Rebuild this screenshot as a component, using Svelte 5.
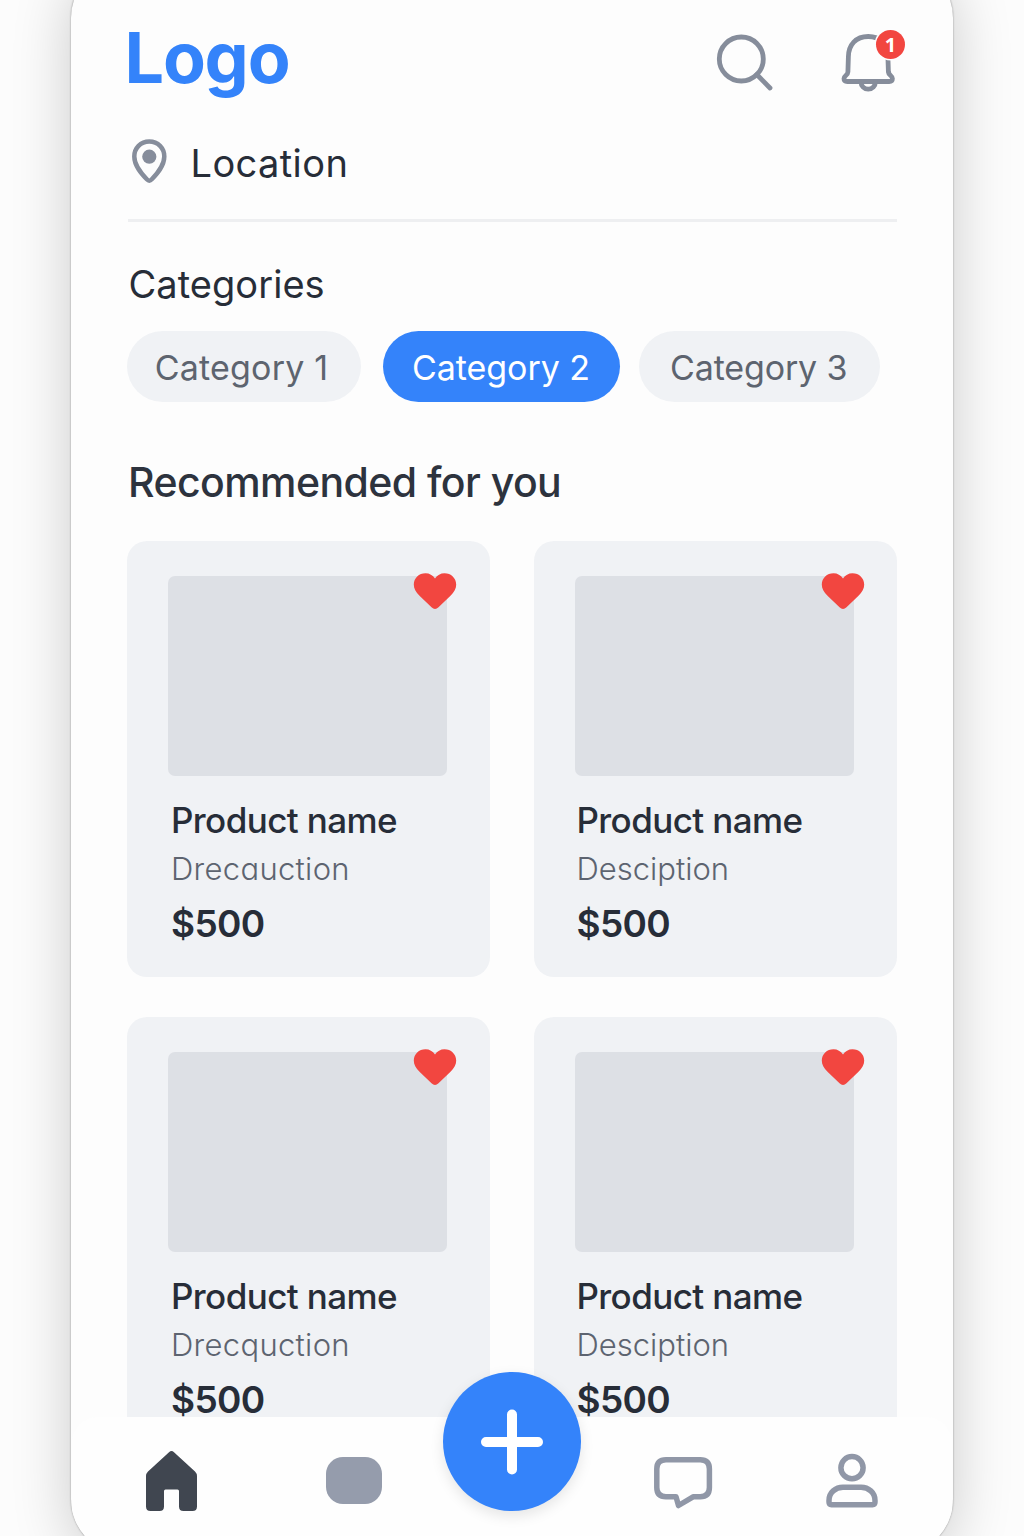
<script>
  const categories = [
    { label: 'Category 1', size: 'first' },
    { label: 'Category 2', size: 'second', active: true },
    { label: 'Category 3', size: 'third' }
  ];

  const products = [
    { name: 'Product name', description: 'Drecauction', price: '$500', side: 'left' },
    { name: 'Product name', description: 'Desciption', price: '$500', side: 'right' },
    { name: 'Product name', description: 'Drecquction', price: '$500', side: 'left' },
    { name: 'Product name', description: 'Desciption', price: '$500', side: 'right' }
  ];
</script>

<div class="screen">
  <div class="phone">
    <main>
      <header>
        <h1><span>Logo</span></h1>
        <div class="actions">
          <svg class="search" viewBox="0 0 60 60" width="60" height="60">
            <circle cx="26.300" cy="28" r="22" />
            <path d="M41.800 43.500 55 57" />
          </svg>
          <div class="bell">
            <svg viewBox="0 0 60 64" width="60" height="64">
              <path d="M28.200 6.500C15.700 6.500 8.700 15 8.400 26.500L7.900 42C7.800 45.500 4 45.500 4 48.500C4 50.600 5.300 51.500 7.300 51.500H49.200C51.200 51.500 52.400 50.600 52.400 48.500C52.400 45.500 48.700 45.500 48.400 42L47.900 26.500C47.600 15 40.700 6.500 28.200 6.500Z" />
              <path d="M21 51.700C21 56 24.200 59.200 28.200 59.200C32.200 59.200 35.400 56 35.400 51.700" />
            </svg>
            <span class="badge">1</span>
          </div>
        </div>
      </header>

      <div class="location">
        <svg viewBox="0 0 36 46" width="36" height="46">
          <path d="M18.300 2.500C9.600 2.500 3.300 9.200 3.300 17.500C3.300 27 10.800 35 15.800 40.300C17.500 42.100 19.100 42.100 20.800 40.300C25.800 35 33.300 27 33.300 17.500C33.300 9.200 27 2.500 18.300 2.500Z" />
          <circle cx="18.300" cy="17.700" r="7.100" />
        </svg>
        <span>Location</span>
      </div>

      <h2 class="categories-title"><span>Categories</span></h2>
      <div class="chips">
        {#each categories as category}
          <button class="chip {category.size}" class:active={category.active}>
            <span>{category.label}</span>
          </button>
        {/each}
      </div>

      <h2 class="recommended"><span>Recommended for you</span></h2>
      <div class="grid">
        {#each products as product}
          <article class="card {product.side}">
            <div class="photo">
              <svg class="heart" viewBox="0 0 44 38" width="44" height="38">
                <path d="M22 6.600C19.800 3.200 16.500 1.200 12.500 1.200C6 1.200 .8 6 .8 12.600C.8 16.800 2.800 20.300 6.500 23.800L18.500 35.300C20.800 37.400 23.200 37.400 25.500 35.300L37.500 23.800C41.200 20.300 43.200 16.800 43.200 12.600C43.200 6 38 1.200 31.500 1.200C27.500 1.200 24.200 3.200 22 6.600Z" />
              </svg>
            </div>
            <p class="name"><span>{product.name}</span></p>
            <p class="description"><span>{product.description}</span></p>
            <p class="price"><span>{product.price}</span></p>
          </article>
        {/each}
      </div>
    </main>

    <nav>
      <svg class="home" viewBox="0 0 52 62" width="52" height="62">
        <path d="M24 2.200Q26.500 -.1 29 2.200L50 21.500Q52 23.500 52 26V56.500Q52 61 47.500 61H38.500Q34 61 34 56.500V41Q34 39.500 32.500 39.500H20.500Q19 39.500 19 41V56.500Q19 61 14.500 61H5.500Q1 61 1 56.500V26Q1 23.500 3 21.500Z" />
      </svg>
      <div class="tile"></div>
      <button class="fab" aria-label="Add">
        <svg viewBox="0 0 66 68" width="66" height="68">
          <path d="M33 6.500V61.500M7 34H59" />
        </svg>
      </button>
      <svg class="chat" viewBox="0 0 60 54" width="60" height="54">
        <path d="M13 3.800H47.200Q56.400 3.800 56.400 13V31.500Q56.400 40.700 47.200 40.700H40.500L25.500 49.500L23 40.700H13Q3.800 40.700 3.800 31.500V13Q3.800 3.800 13 3.800Z" />
      </svg>
      <svg class="person" viewBox="0 0 52 56" width="52" height="56">
        <circle cx="26" cy="14.700" r="11.100" />
        <path d="M3 49V47.500C3 39.500 9.500 34.300 17 34.300H35C42.500 34.300 49 39.500 49 47.500V49Q49 51.700 46.500 51.700H5.500Q3 51.700 3 49Z" />
      </svg>
    </nav>
  </div>
</div>

<style>
  :global(body) {
    margin: 0;
    background: #fcfcfc;
    overflow: hidden;
  }

  .screen {
    height: 1536px;
    overflow: hidden;
    display: flex;
    justify-content: center;
    align-items: flex-start;
    background: #fcfcfc;
    font-family: Inter, 'Liberation Sans', sans-serif;
    color: #272d38;
  }

  .phone {
    box-sizing: border-box;
    width: 882px;
    height: 1593px;
    margin-top: -38px;
    flex: none;
    border-radius: 56px;
    background: #fdfdfd;
    overflow: clip;
    box-shadow: 0 0 2px rgba(0, 0, 0, 0.4), 0 8px 60px rgba(0, 0, 0, 0.2);
    display: flex;
    flex-direction: column;
  }

  main {
    box-sizing: border-box;
    height: 1455px;
    padding: 38px 56px 0 56px;
    overflow: hidden;
    flex: none;
  }

  span {
    display: inline-block;
    white-space: nowrap;
  }

  h1,
  h2,
  p {
    margin: 0;
  }

  header {
    height: 115px;
    display: flex;
    justify-content: space-between;
    align-items: flex-start;
  }

  h1 {
    font-size: 70px;
    line-height: 115px;
    font-weight: 700;
    letter-spacing: -1.200px;
    color: #3483fa;
    margin-left: -2.500px;
  }

  .actions {
    display: flex;
    gap: 65px;
    padding-top: 34px;
  }

  .actions svg {
    display: block;
    fill: none;
    stroke: #868d9b;
    stroke-width: 4.800;
    stroke-linecap: round;
    stroke-linejoin: round;
  }

  .search {
    margin-top: -3px;
  }

  .bell {
    position: relative;
    width: 64px;
    margin: -4px -7px 0 0;
  }

  .badge {
    position: absolute;
    left: 36px;
    top: 0;
    width: 29px;
    height: 29px;
    line-height: 29px;
    border-radius: 50%;
    background: #f24640;
    box-shadow: 0 0 0 1.5px #fdfdfe;
    color: #fff;
    font-family: 'Open Sans', sans-serif;
    font-size: 20px;
    font-weight: 700;
    text-align: center;
  }

  .location {
    height: 104px;
    border-bottom: 3px solid #eeeff1;
    margin: 0 0 0 1px;
    display: flex;
    align-items: flex-start;
    padding-left: 3px;
  }

  .location svg {
    margin: 23.500px 0 0 0;
  }

  .location path {
    fill: none;
    stroke: #868d9b;
    stroke-width: 4.500;
  }

  .location circle {
    fill: #868d9b;
  }

  .location span {
    margin-left: 23.500px;
    font-size: 38px;
    line-height: 97px;
    font-weight: 400;
    letter-spacing: 0.400px;
  }

  .categories-title {
    height: 109px;
    margin-left: 1.500px;
    font-size: 38px;
    line-height: 124px;
    font-weight: 400;
    letter-spacing: 0.050px;
  }

  .chips {
    display: flex;
    height: 71px;
  }

  .chip {
    border: 0;
    padding: 0;
    height: 71px;
    border-radius: 36px;
    background: #f0f2f5;
    color: #5d646f;
    font: 400 34px/73px Inter, 'Liberation Sans', sans-serif;
  }

  .first {
    width: 234px;
    padding-right: 5px;
    margin-right: 22px;
    letter-spacing: 0.200px;
  }

  .second {
    width: 237.400px;
    padding-right: 1.500px;
    margin-right: 18.600px;
    letter-spacing: -0.050px;
  }

  .third {
    width: 241.400px;
    padding-right: 2px;
    letter-spacing: -0.150px;
  }

  .chip.active {
    background: #3483fa;
    color: #fff;
  }

  .recommended {
    height: 139px;
    margin-left: 1px;
    font-size: 41px;
    line-height: 160px;
    font-weight: 550;
    letter-spacing: -0.570px;
    color: #2d333e;
  }

  .grid {
    display: grid;
    grid-template-columns: 363px 363px;
    justify-content: space-between;
    row-gap: 40px;
  }

  .card {
    box-sizing: border-box;
    height: 436px;
    border-radius: 20px;
    background: #f0f2f5;
    padding: 35px 42px 0 41px;
  }

  .photo {
    position: relative;
    width: 279px;
    height: 200px;
    border-radius: 7px;
    background: #dde0e5;
  }

  .heart {
    position: absolute;
    right: -10px;
    top: -4px;
    fill: #f24640;
  }

  .right .heart {
    right: -11px;
  }

  .left p {
    margin-left: 3px;
  }

  .right p {
    margin-left: 1.500px;
  }

  .name {
    margin-top: 20px;
    font-size: 35px;
    line-height: 48px;
    font-weight: 500;
    letter-spacing: -0.600px;
  }

  .description {
    font-size: 31px;
    line-height: 50px;
    font-weight: 300;
    color: #5d6470;
    font-feature-settings: 'cv11';
  }

  .left .description {
    letter-spacing: 0.300px;
  }

  .price {
    font-size: 37px;
    line-height: 60px;
    font-weight: 600;
    letter-spacing: -0.650px;
  }

  nav {
    box-sizing: border-box;
    position: relative;
    height: 138px;
    margin: 0 1px;
    padding-left: 73px;
    border-radius: 26px 26px 0 0;
    background: #fefefe;
    display: flex;
    align-items: flex-start;
    flex: none;
  }

  nav svg {
    display: block;
    flex: none;
  }

  .home {
    margin-top: 33px;
    fill: #404650;
  }

  .tile {
    width: 56px;
    height: 47px;
    flex: none;
    margin: 40px 0 0 129px;
    border-radius: 17px;
    background: #959cac;
  }

  .fab {
    width: 138px;
    height: 139px;
    flex: none;
    padding: 0;
    border: 0;
    border-radius: 50%;
    margin: -45px 0 0 61px;
    background: #3483fa;
    box-shadow: 0 5px 14px rgba(0, 0, 0, 0.1);
    display: grid;
    place-items: center;
  }

  .fab path {
    fill: none;
    stroke: #fff;
    stroke-width: 10;
    stroke-linecap: round;
  }

  .chat,
  .person {
    fill: none;
    stroke: #9097a7;
    stroke-width: 5.500;
    stroke-linejoin: round;
  }

  .chat {
    margin: 39px 0 0 72px;
  }

  .person {
    margin: 36px 0 0 112.500px;
  }
</style>
